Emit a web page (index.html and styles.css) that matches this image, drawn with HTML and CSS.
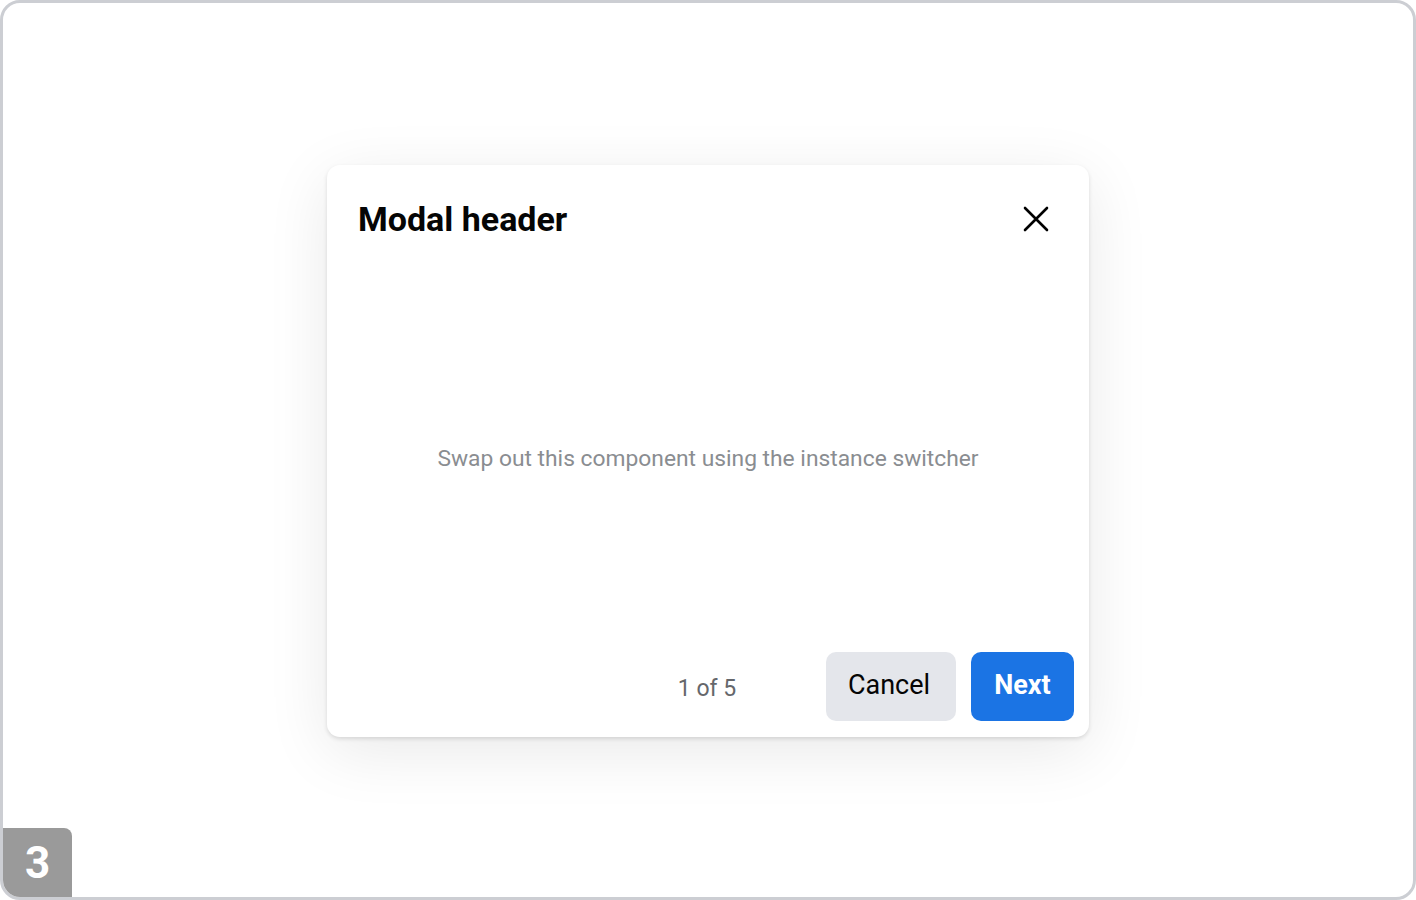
FILE: index.html
```html
<!DOCTYPE html>
<html lang="en">
<head>
  <meta charset="UTF-8" />
  <title>Modal</title>
  <link rel="stylesheet" href="styles.css">
</head>
<body>
  <div class="frame">
    <div class="modal">
      <div class="modal-header">
        <h2>Modal header</h2>
        <button class="close-btn" aria-label="Close">
          <svg width="28" height="28" viewBox="0 0 28 28"><path d="M3 3 L25 25 M25 3 L3 25" stroke="#000" stroke-width="2.6" stroke-linecap="round"/></svg>
        </button>
      </div>
      <div class="modal-body">Swap out this component using the instance switcher</div>
      <div class="modal-footer">
        <span></span>
        <span class="counter">1 of 5</span>
        <div class="actions">
          <button class="btn btn-cancel">Cancel</button>
          <button class="btn btn-next">Next</button>
        </div>
      </div>
    </div>
    <div class="badge">3</div>
  </div>
</body>
</html>
```

FILE: styles.css
```css
* {
  margin: 0;
  padding: 0;
  box-sizing: border-box;
}
body {
  background: white;
  font-family: Roboto, 'Liberation Sans', sans-serif;
}
.frame {
  position: relative;
  width: 1416px;
  height: 900px;
  border: 3px solid #ccced3;
  border-radius: 20px;
  overflow: hidden;
  display: flex;
  align-items: center;
  justify-content: center;
}
.modal {
  width: 762px;
  height: 572px;
  background: white;
  border-radius: 13px;
  box-shadow: 0 2px 4px rgba(0, 0, 0, 0.12), 0 14px 64px rgba(0, 0, 0, 0.09);
  display: flex;
  flex-direction: column;
  margin-top: 2px;
}
.modal-header {
  display: flex;
  align-items: center;
  justify-content: space-between;
  padding: 34px 39px 0 31px;
}
.modal-header h2 {
  font-size: 34px;
  font-weight: 700;
  color: #050505;
  line-height: 40px;
}
.close-btn {
  background: none;
  border: none;
  width: 28px;
  height: 28px;
  cursor: pointer;
}
.modal-body {
  flex: 1;
  display: flex;
  align-items: center;
  justify-content: center;
  font-size: 22.8px;
  color: #8a8d91;
  padding-top: 26px;
}
.modal-footer {
  display: grid;
  grid-template-columns: 1fr auto 1fr;
  align-items: center;
  padding: 0 15px 16px 15px;
}
.counter {
  font-size: 23px;
  color: #65676b;
  padding-top: 4px;
  margin-right: 2px;
}
.actions {
  display: flex;
  justify-content: flex-end;
  gap: 15px;
}
.btn {
  height: 69px;
  border: none;
  border-radius: 10px;
  font-family: Roboto, 'Liberation Sans', sans-serif;
  font-size: 27px;
  padding-bottom: 3px;
  cursor: pointer;
}
.btn-cancel {
  width: 130px;
  background: #e4e6eb;
  color: #050505;
  padding-right: 4px;
}
.btn-next {
  width: 103px;
  background: #1b74e4;
  color: white;
  font-weight: 700;
}
.badge {
  position: absolute;
  left: 0;
  bottom: 0;
  width: 69px;
  height: 69px;
  background: #9a9a9a;
  border-top-right-radius: 8px;
  color: white;
  font-size: 44px;
  font-weight: 700;
  display: flex;
  align-items: center;
  justify-content: center;
}
```
